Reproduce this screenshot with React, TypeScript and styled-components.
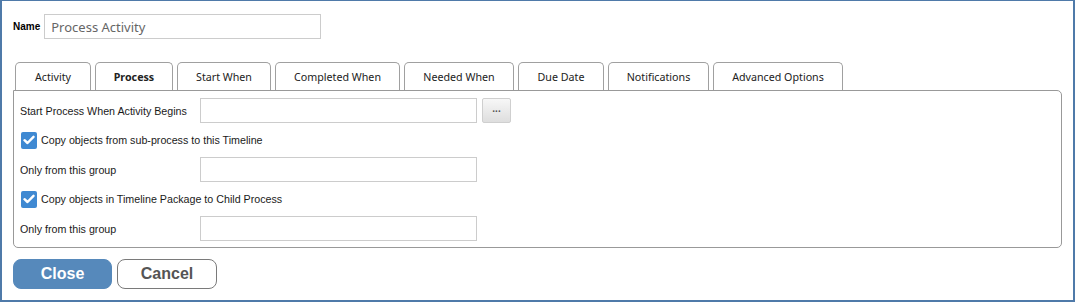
import styled, { createGlobalStyle } from "styled-components";

const GlobalStyle = createGlobalStyle`
  html, body {
    margin: 0;
    padding: 0;
    background: #fff;
  }
  * {
    box-sizing: border-box;
  }
`;

const Frame = styled.div`
  width: 1075px;
  height: 302px;
  border: 2px solid #4f7aa9;
  border-top-width: 1px;
  padding: 13px 11px 0 11px;
  font-family: "Liberation Sans", Arial, sans-serif;
  background: #fff;
`;

const NameRow = styled.div`
  display: flex;
  align-items: center;
  gap: 4px;
  height: 25px;
`;

const NameLabel = styled.label`
  font-size: 10px;
  font-weight: bold;
  color: #000;
`;

const TextInput = styled.input<{ $big?: boolean }>`
  width: 277px;
  height: 25px;
  border: 1px solid #cccccc;
  padding: 0 6px;
  font-family: ${(p) =>
    p.$big ? `"Noto Sans", "Open Sans", sans-serif` : `"Liberation Sans", Arial, sans-serif`};
  font-size: ${(p) => (p.$big ? "13px" : "12px")};
  color: #666;
  background: #fff;
  outline: none;
`;

const TabBar = styled.div`
  display: flex;
  gap: 4px;
  margin-top: 23px;
  padding-left: 2px;
  height: 28px;
`;

const Tab = styled.div<{ $active?: boolean; $w: number }>`
  width: ${(p) => p.$w}px;
  height: 28px;
  display: flex;
  align-items: center;
  justify-content: center;
  border: 1px solid #a0a0a0;
  border-bottom: none;
  border-radius: 5px 5px 0 0;
  background: #fff;
  font-family: "Noto Sans", "Open Sans", sans-serif;
  font-size: 10.7px;
  font-weight: ${(p) => (p.$active ? 700 : 400)};
  color: #222;
  white-space: nowrap;
`;

const Panel = styled.div`
  width: 1049px;
  border: 1px solid #999;
  border-radius: 0 5px 5px 5px;
  padding: 7px 6px 6px 6px;
  display: flex;
  flex-direction: column;
  gap: 4px;
`;

const FieldRow = styled.div`
  display: flex;
  align-items: center;
  height: 25px;
`;

const FieldLabel = styled.label`
  width: 180px;
  font-size: 10.7px;
  color: #1a1a1a;
`;

const BrowseButton = styled.button`
  margin-left: 5px;
  width: 29px;
  height: 25px;
  border: 1px solid #cfcfcf;
  border-radius: 2px;
  background: linear-gradient(#f7f7f7, #dedede);
  color: #555;
  font-size: 10px;
  font-weight: bold;
  padding: 0 0 4px 0;
  font-family: "Liberation Sans", Arial, sans-serif;
`;

const CheckRow = styled.label`
  display: flex;
  align-items: center;
  gap: 4px;
  height: 26px;
  padding-left: 1px;
  font-size: 10.7px;
  color: #1a1a1a;
`;

const CheckBox = styled.span`
  width: 16px;
  height: 17px;
  border-radius: 2px;
  background: #3f89d2;
  display: flex;
  align-items: center;
  justify-content: center;
`;

const ButtonRow = styled.div`
  display: flex;
  gap: 5px;
  margin-top: 11px;
`;

const ActionButton = styled.button<{ $primary?: boolean }>`
  width: ${(p) => (p.$primary ? "99px" : "100px")};
  height: 30px;
  border-radius: 8px;
  font-family: "Liberation Sans", Arial, sans-serif;
  font-size: 16px;
  font-weight: bold;
  border: 1px solid ${(p) => (p.$primary ? "#5689bb" : "#7a7a7a")};
  background: ${(p) => (p.$primary ? "#5689bb" : "#fff")};
  color: ${(p) => (p.$primary ? "#fff" : "#555")};
`;

const tabs = [
  { label: "Activity", w: 76 },
  { label: "Process", w: 78 },
  { label: "Start When", w: 94 },
  { label: "Completed When", w: 125 },
  { label: "Needed When", w: 110 },
  { label: "Due Date", w: 86 },
  { label: "Notifications", w: 101 },
  { label: "Advanced Options", w: 130 },
];

function Check() {
  return (
    <CheckBox>
      <svg width="12" height="10" viewBox="0 0 12 10">
        <path
          d="M1.5 5.2 L4.5 8 L10.5 1.8"
          fill="none"
          stroke="#fff"
          strokeWidth="2.4"
          strokeLinecap="round"
          strokeLinejoin="round"
        />
      </svg>
    </CheckBox>
  );
}

export default function App() {
  return (
    <>
      <GlobalStyle />
      <Frame>
        <NameRow>
          <NameLabel>Name</NameLabel>
          <TextInput $big defaultValue="Process Activity" />
        </NameRow>
        <TabBar>
          {tabs.map((t) => (
            <Tab key={t.label} $w={t.w} $active={t.label === "Process"}>
              {t.label}
            </Tab>
          ))}
        </TabBar>
        <Panel>
          <FieldRow>
            <FieldLabel>Start Process When Activity Begins</FieldLabel>
            <TextInput />
            <BrowseButton>...</BrowseButton>
          </FieldRow>
          <CheckRow>
            <Check />
            Copy objects from sub-process to this Timeline
          </CheckRow>
          <FieldRow>
            <FieldLabel>Only from this group</FieldLabel>
            <TextInput />
          </FieldRow>
          <CheckRow>
            <Check />
            Copy objects in Timeline Package to Child Process
          </CheckRow>
          <FieldRow>
            <FieldLabel>Only from this group</FieldLabel>
            <TextInput />
          </FieldRow>
        </Panel>
        <ButtonRow>
          <ActionButton $primary>Close</ActionButton>
          <ActionButton>Cancel</ActionButton>
        </ButtonRow>
      </Frame>
    </>
  );
}
